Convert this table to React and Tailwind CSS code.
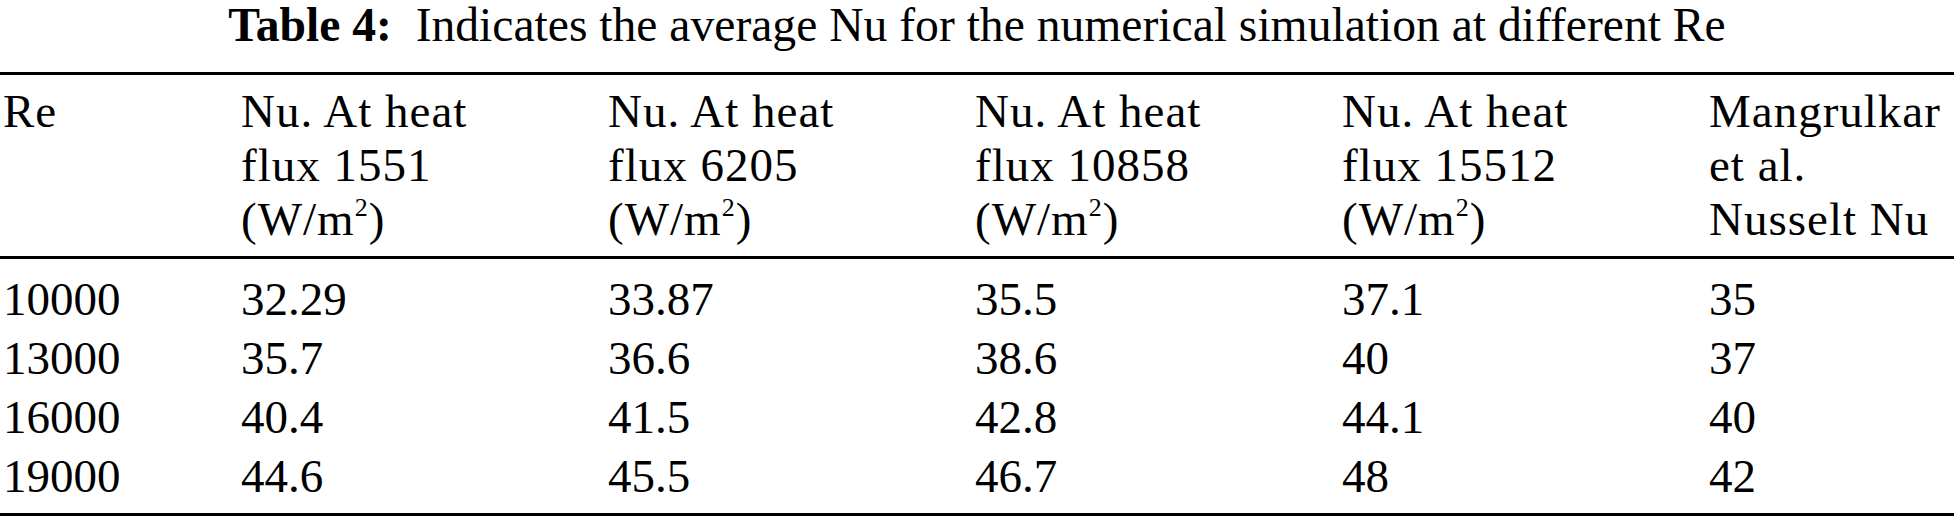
import React from "react";

const header = [
  ["Re"],
  ["Nu. At heat", "flux 1551", "W"],
  ["Nu. At heat", "flux 6205", "W"],
  ["Nu. At heat", "flux 10858", "W"],
  ["Nu. At heat", "flux 15512", "W"],
  ["Mangrulkar", "et al.", "Nusselt Nu"],
];

const rows = [
  ["10000", "32.29", "33.87", "35.5", "37.1", "35"],
  ["13000", "35.7", "36.6", "38.6", "40", "37"],
  ["16000", "40.4", "41.5", "42.8", "44.1", "40"],
  ["19000", "44.6", "45.5", "46.7", "48", "42"],
];

const grid = "grid grid-cols-[238px_367px_367px_367px_367px_1fr]";

function Unit() {
  return (
    <span>
      (W/m<sup className="text-[26px] top-[-0.75em]">2</sup>)
    </span>
  );
}

export default function App() {
  return (
    <div
      className="w-[1954px] h-[521px] bg-white text-black text-[47px] overflow-hidden"
      style={{ fontFamily: '"Liberation Serif", "Times New Roman", serif' }}
    >
      <div className="h-[72px] leading-[50px] text-center whitespace-pre text-[47.6px]">
        <span className="font-bold">Table 4:</span>
        {"  Indicates the average Nu for the numerical simulation at different Re"}
      </div>
      <div className="border-t-[3px] border-b-[3px] border-black">
        <div className={`${grid} pt-[9px] pb-[10px] border-b-[3px] border-black leading-[54px] tracking-[1px]`}>
          {header.map((cell, i) => (
            <div key={i} className="pl-[3px] flex flex-col">
              {cell.map((line, j) => (
                <span key={j}>{line === "W" ? <Unit /> : line}</span>
              ))}
            </div>
          ))}
        </div>
        <div className="pt-[11px] pb-[7px]">
          {rows.map((r, i) => (
            <div key={i} className={`${grid} leading-[59px]`}>
              {r.map((c, j) => (
                <div key={j} className="pl-[3px]">
                  {c}
                </div>
              ))}
            </div>
          ))}
        </div>
      </div>
    </div>
  );
}
